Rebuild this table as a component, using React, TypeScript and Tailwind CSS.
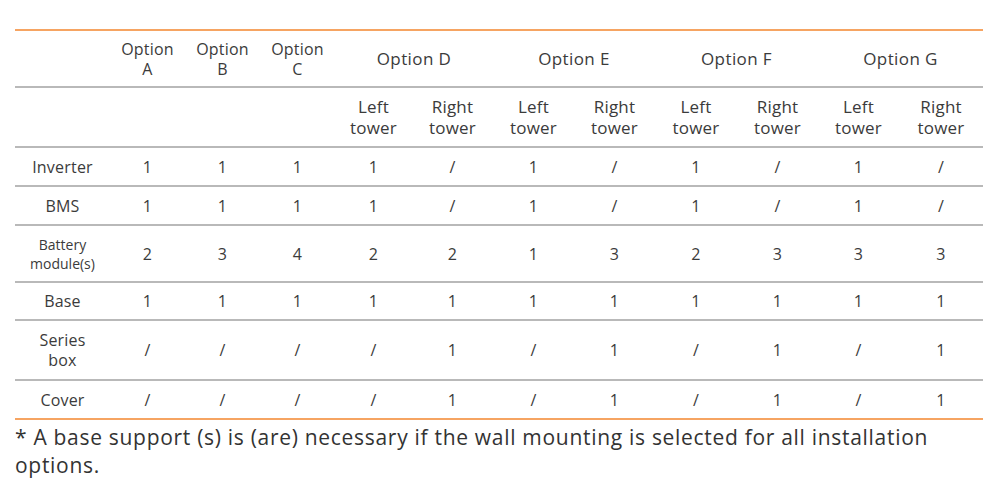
const ROWS: { label: string[]; small?: boolean; h: string; vals: string[] }[] = [
  { label: ['Inverter'], h: 'h-[39px]', vals: ['1', '1', '1', '1', '/', '1', '/', '1', '/', '1', '/'] },
  { label: ['BMS'], h: 'h-[39px]', vals: ['1', '1', '1', '1', '/', '1', '/', '1', '/', '1', '/'] },
  { label: ['Battery', 'module(s)'], small: true, h: 'h-[57px]', vals: ['2', '3', '4', '2', '2', '1', '3', '2', '3', '3', '3'] },
  { label: ['Base'], h: 'h-[38px]', vals: ['1', '1', '1', '1', '1', '1', '1', '1', '1', '1', '1'] },
  { label: ['Series', 'box'], h: 'h-[60px]', vals: ['/', '/', '/', '/', '1', '/', '1', '/', '1', '/', '1'] },
  { label: ['Cover'], h: 'h-[39px]', vals: ['/', '/', '/', '/', '1', '/', '1', '/', '1', '/', '1'] },
];

const GROUPS = ['D', 'E', 'F', 'G'];

export default function App() {
  return (
    <div className="w-[1000px] h-[500px] bg-white pt-[29px] pl-[15px] text-[#3b3b3b] font-['Open_Sans','Noto_Sans',sans-serif]">
      <table className="w-[968px] table-fixed border-collapse text-[16px] leading-[20px] tracking-[0.2px] text-center">
        <colgroup>
          <col className="w-[95px]" />
          <col className="w-[75px]" />
          <col className="w-[75px]" />
          <col className="w-[75px]" />
          <col className="w-[77px]" />
          <col className="w-[81px]" />
          <col className="w-[81px]" />
          <col className="w-[81px]" />
          <col className="w-[82px]" />
          <col className="w-[81px]" />
          <col className="w-[81px]" />
          <col className="w-[84px]" />
        </colgroup>
        <thead>
          <tr className="h-[57px] border-t-2 border-t-[#f6a462] border-b-2 border-b-[#b9b9b9]">
            <th className="font-normal" />
            {['A', 'B', 'C'].map(l => (
              <th key={l} className="font-normal">
                Option
                <br />
                {l}
              </th>
            ))}
            {GROUPS.map(g => (
              <th key={g} colSpan={2} className="font-normal text-[17px] tracking-[0.4px]">
                Option {g}
              </th>
            ))}
          </tr>
          <tr className="h-[60px] border-b-2 border-b-[#b9b9b9]">
            <th />
            <th />
            <th />
            <th />
            {GROUPS.map(g => [
              <th key={g + 'l'} className="font-normal text-[17px] leading-[21px]">
                Left
                <br />
                tower
              </th>,
              <th key={g + 'r'} className="font-normal text-[17px] leading-[21px]">
                Right
                <br />
                tower
              </th>,
            ])}
          </tr>
        </thead>
        <tbody>
          {ROWS.map((row, idx) => (
            <tr
              key={row.label.join(' ')}
              className={`${row.h} border-b-2 ${idx === ROWS.length - 1 ? 'border-b-[#f6a462]' : 'border-b-[#b9b9b9]'}`}
            >
              <td className={row.small ? 'text-[14px] leading-[19px] tracking-normal' : ''}>
                {row.label.map((t, i) => (
                  <span key={i}>
                    {i > 0 && <br />}
                    {t}
                  </span>
                ))}
              </td>
              {row.vals.map((v, i) => (
                <td key={i}>{v}</td>
              ))}
            </tr>
          ))}
        </tbody>
      </table>
      <p className="w-[960px] text-[21px] leading-[28px] tracking-[0.7px] mt-[3px] text-[#333]">
        * A base support (s) is (are) necessary if the wall mounting is selected for all installation options.
      </p>
    </div>
  );
}
